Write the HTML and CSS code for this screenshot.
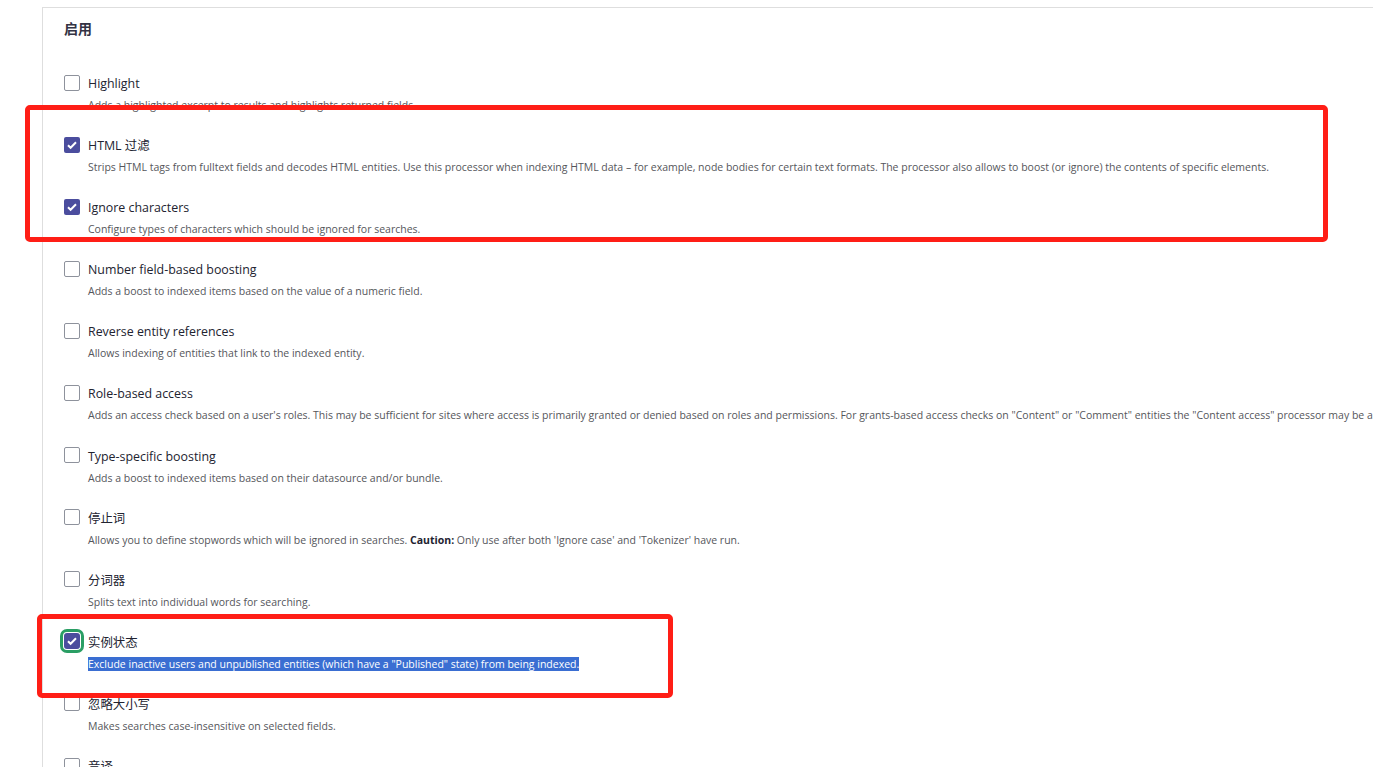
FILE: index.html
```html
<!DOCTYPE html>
<html lang="zh-CN">

<head>
    <meta charset="UTF-8">
    <meta name="viewport" content="width=device-width, initial-scale=1.0">
    <title>Processors</title>
    <link rel="stylesheet" href="styles.css">
</head>

<body>
    <div class="card">
        <h3 class="card-title">启用</h3>

        <div class="item">
            <div class="item-head">
                <span class="box"></span>
                <label>Highlight</label>
            </div>
            <div class="desc">Adds a highlighted excerpt to results and highlights returned fields.</div>
        </div>

        <div class="item">
            <div class="item-head">
                <span class="box checked"></span>
                <label>HTML 过滤</label>
            </div>
            <div class="desc">Strips HTML tags from fulltext fields and decodes HTML entities. Use this processor when indexing HTML data – for example, node bodies for certain text formats. The processor also allows to boost (or ignore) the contents of specific elements.</div>
        </div>

        <div class="item">
            <div class="item-head">
                <span class="box checked"></span>
                <label>Ignore characters</label>
            </div>
            <div class="desc">Configure types of characters which should be ignored for searches.</div>
        </div>

        <div class="item">
            <div class="item-head">
                <span class="box"></span>
                <label>Number field-based boosting</label>
            </div>
            <div class="desc">Adds a boost to indexed items based on the value of a numeric field.</div>
        </div>

        <div class="item">
            <div class="item-head">
                <span class="box"></span>
                <label>Reverse entity references</label>
            </div>
            <div class="desc">Allows indexing of entities that link to the indexed entity.</div>
        </div>

        <div class="item">
            <div class="item-head">
                <span class="box"></span>
                <label>Role-based access</label>
            </div>
            <div class="desc">Adds an access check based on a user's roles. This may be sufficient for sites where access is primarily granted or denied based on roles and permissions. For grants-based access checks on "Content" or "Comment" entities the "Content access" processor may be a better choice.</div>
        </div>

        <div class="item">
            <div class="item-head">
                <span class="box"></span>
                <label>Type-specific boosting</label>
            </div>
            <div class="desc">Adds a boost to indexed items based on their datasource and/or bundle.</div>
        </div>

        <div class="item">
            <div class="item-head">
                <span class="box"></span>
                <label>停止词</label>
            </div>
            <div class="desc">Allows you to define stopwords which will be ignored in searches. <strong>Caution:</strong> Only use after both 'Ignore case' and 'Tokenizer' have run.</div>
        </div>

        <div class="item">
            <div class="item-head">
                <span class="box"></span>
                <label>分词器</label>
            </div>
            <div class="desc">Splits text into individual words for searching.</div>
        </div>

        <div class="item">
            <div class="item-head">
                <span class="box checked focused"></span>
                <label>实例状态</label>
            </div>
            <div class="desc"><span class="selected">Exclude inactive users and unpublished entities (which have a "Published" state) from being indexed.</span></div>
        </div>

        <div class="item">
            <div class="item-head">
                <span class="box"></span>
                <label>忽略大小写</label>
            </div>
            <div class="desc">Makes searches case-insensitive on selected fields.</div>
        </div>

        <div class="item">
            <div class="item-head">
                <span class="box"></span>
                <label>音译</label>
            </div>
            <div class="desc">Makes searches insensitive to accents and other non-ASCII characters.</div>
        </div>
    </div>

    <!-- annotation boxes drawn over the screenshot -->
    <div class="mark mark-top"></div>
    <div class="mark mark-bottom"></div>
</body>

</html>
```

FILE: styles.css
```css
html,
body {
    margin: 0;
    height: 100%;
    overflow: hidden;
}

body {
    background-color: #ffffff;
    color: #222330;
    font-family: "Segoe UI", "Open Sans", "Noto Sans CJK SC", sans-serif;
}

.card {
    width: 1500px;
    margin: 7px 0 0 42px;
    padding: 11px 21px 0 21px;
    border: 1px solid #dedede;
    border-right: none;
}

.card-title {
    margin: 0 0 35px 0;
    font-size: 14px;
    line-height: 20px;
    font-weight: 600;
    color: #333344;
}

.item {
    margin-bottom: 22.1px;
}

.item-head {
    display: flex;
    align-items: center;
    gap: 8px;
    height: 20px;
}

.item-head label {
    font-size: 12.4px;
    line-height: 20px;
    color: #222330;
}

.box {
    box-sizing: border-box;
    width: 16px;
    height: 16px;
    border: 1px solid #8e929c;
    border-radius: 2px;
    background-color: #ffffff;
    margin-top: -3px;
}

.box.checked {
    border: none;
    background-color: #4b4d9e;
    background-image: url("data:image/svg+xml,%3Csvg xmlns='http://www.w3.org/2000/svg' viewBox='0 0 16 16'%3E%3Cpath d='M4 8.3l2.6 2.5L12 5.3' fill='none' stroke='%23ffffff' stroke-width='2'/%3E%3C/svg%3E");
}

.box.focused {
    outline: 3px solid #2a9e64;
    outline-offset: 1px;
    border-radius: 3px;
}

.desc {
    margin-top: 2px;
    font-size: 10.5px;
    line-height: 18px;
    color: #55565b;
    padding-left: 24px;
    white-space: nowrap;
}

.desc strong {
    color: #222330;
}

.selected {
    background-color: #3a6ed2;
    color: #ffffff;
}

.mark {
    position: absolute;
    box-sizing: border-box;
    border: 5px solid #ff1e16;
    border-radius: 5px;
}

.mark-top {
    left: 25px;
    top: 105px;
    width: 1303px;
    height: 137px;
}

.mark-bottom {
    left: 37px;
    top: 614px;
    width: 636px;
    height: 84px;
}
```
